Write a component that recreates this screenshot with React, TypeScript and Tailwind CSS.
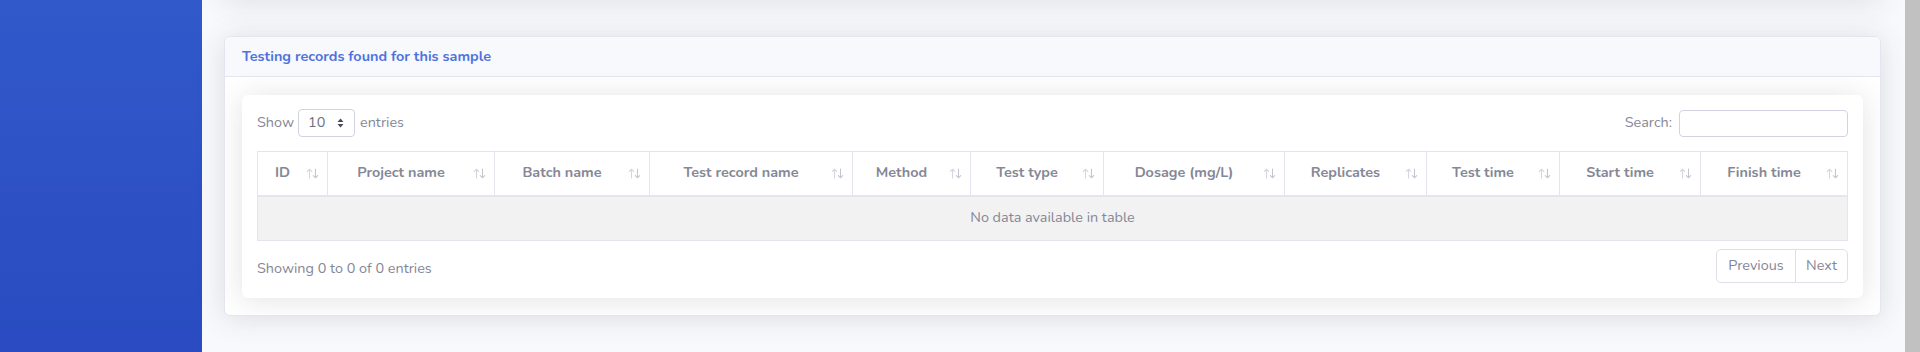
import React from "react";

const FONT = { fontFamily: '"Nunito", "Noto Sans", "Open Sans", sans-serif' };

const columns: { label: string; w: number }[] = [
  { label: "ID", w: 70 },
  { label: "Project name", w: 167 },
  { label: "Batch name", w: 155 },
  { label: "Test record name", w: 203 },
  { label: "Method", w: 118 },
  { label: "Test type", w: 133 },
  { label: "Dosage (mg/L)", w: 181 },
  { label: "Replicates", w: 142 },
  { label: "Test time", w: 133 },
  { label: "Start time", w: 141 },
  { label: "Finish time", w: 147 },
];

function SortIcon() {
  return (
    <svg width="13" height="11" viewBox="0 0 13 11" className="absolute right-[8px] top-[16px]">
      <g stroke="#d4d6e0" strokeWidth="1.1" fill="none" strokeLinecap="round">
        <path d="M3.5 10V1.2M1.3 3.4L3.5 1.2L5.7 3.4" />
      </g>
      <g stroke="#c4c6d2" strokeWidth="1.1" fill="none" strokeLinecap="round">
        <path d="M9.5 1v8.8M7.3 7.6L9.5 9.8L11.7 7.6" />
      </g>
    </svg>
  );
}

function SelectCaret() {
  return (
    <svg width="7" height="10" viewBox="0 0 7 10">
      <path d="M3.5 0.5L6.5 4H0.5Z" fill="#4a4a55" />
      <path d="M3.5 9.5L6.5 6H0.5Z" fill="#4a4a55" />
    </svg>
  );
}

export default function App() {
  return (
    <div className="flex h-[352px] w-[1920px] overflow-hidden bg-[#f8f9fc]" style={FONT}>
      <div className="w-[202px] shrink-0 bg-gradient-to-b from-[#3159ca] to-[#2a4bc1]" />
      <div className="flex-1 flex flex-col">
        <div className="-mt-[20px] mr-[24px] ml-[22px] h-[20px] shrink-0 bg-white shadow-[0_2px_28px_0_rgba(58,59,69,0.15)]" />
        <div className="pl-[22px] pr-[24px] pt-[36px]">
          <div className="rounded-[6px] border border-[#e3e6f0] bg-white shadow-[0_2px_28px_0_rgba(58,59,69,0.15)] overflow-hidden">
            <div className="h-[40px] flex items-center px-[17px] bg-[#f8f9fc] border-b border-[#e3e6f0]">
              <span className="text-[14.4px] font-bold text-[#4e73df]">Testing records found for this sample</span>
            </div>
            <div className="px-[17px] pt-[18px] pb-[17px]">
              <div className="rounded-[6px] bg-white shadow-[0_2px_28px_0_rgba(58,59,69,0.15)] px-[15px] pt-[14px] pb-[15px] text-[14.4px] text-[#858796]">
                <div className="flex items-center justify-between h-[28px]">
                  <div className="flex items-center">
                    <span>Show</span>
                    <div className="ml-[4px] w-[57px] h-[28px] rounded-[4px] border border-[#d1d3e2] flex items-center justify-between pl-[9px] pr-[10px] text-[#6e707e]">
                      <span>10</span>
                      <SelectCaret />
                    </div>
                    <span className="ml-[5px]">entries</span>
                  </div>
                  <div className="flex items-center">
                    <span>Search:</span>
                    <div className="ml-[7px] w-[169px] h-[27px] rounded-[4px] border border-[#d1d3e2] bg-white" />
                  </div>
                </div>
                <table className="mt-[14px] w-[1590px] table-fixed border-collapse border border-[#e3e6f0]">
                  <colgroup>
                    {columns.map((c) => (
                      <col key={c.label} style={{ width: c.w }} />
                    ))}
                  </colgroup>
                  <thead>
                    <tr>
                      {columns.map((c) => (
                        <th
                          key={c.label}
                          className="relative h-[44px] p-0 border border-[#e3e6f0] border-b-2 pl-[10px] pr-[30px] text-center font-bold text-[#858796]"
                        >
                          {c.label}
                          <SortIcon />
                        </th>
                      ))}
                    </tr>
                  </thead>
                  <tbody>
                    <tr className="bg-[#f2f2f2]">
                      <td colSpan={11} className="h-[45px] p-0 border border-[#e3e6f0] text-center text-[#858796]">
                        No data available in table
                      </td>
                    </tr>
                  </tbody>
                </table>
                <div className="mt-[8px] flex items-center justify-between">
                  <span className="pt-[6px]">Showing 0 to 0 of 0 entries</span>
                  <div className="flex h-[34px]">
                    <div className="w-[80px] flex items-center justify-center rounded-l-[5px] border border-[#dddfeb] text-[#858796]">
                      Previous
                    </div>
                    <div className="w-[53px] -ml-px flex items-center justify-center rounded-r-[5px] border border-[#dddfeb] text-[#858796]">
                      Next
                    </div>
                  </div>
                </div>
              </div>
            </div>
          </div>
        </div>
      </div>
      <div className="w-[16px] shrink-0 bg-[#c1c1c1]" />
    </div>
  );
}
